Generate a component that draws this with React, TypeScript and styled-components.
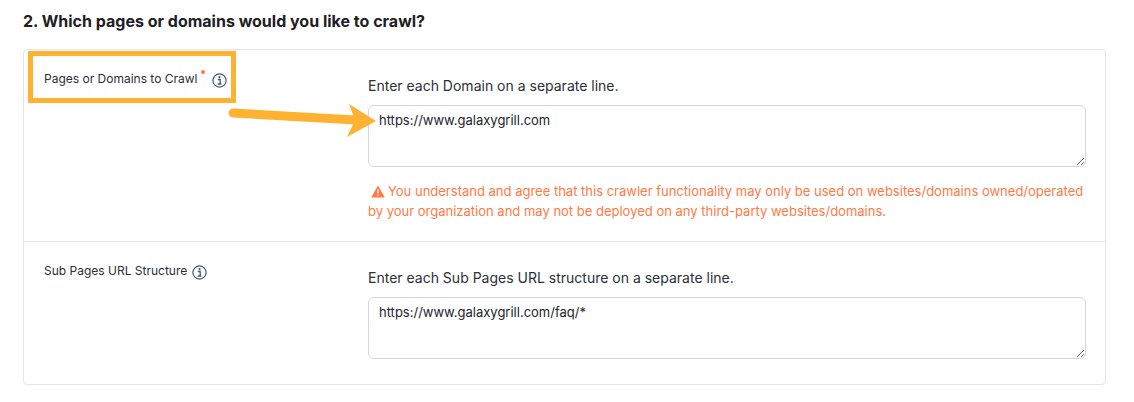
import React from "react";
import styled, { createGlobalStyle } from "styled-components";

const GlobalStyle = createGlobalStyle`
  html, body {
    margin: 0;
    background: #fff;
    font-family: Inter, "Liberation Sans", sans-serif;
    color: #22252a;
  }
`;

const Page = styled.div`
  position: relative;
  width: 1134px;
  height: 402px;
  padding: 12px 28px 0 23px;
  box-sizing: border-box;
  overflow: hidden;
`;

const Title = styled.h2`
  margin: 0 0 18px;
  font-size: 16px;
  line-height: 19px;
  font-weight: 700;
  color: #1d2024;
`;

const Card = styled.div`
  border: 1px solid #e4e5e7;
  border-radius: 4px;
`;

const Row = styled.div<{ $height: number }>`
  display: grid;
  grid-template-columns: 324px 718px;
  height: ${(p) => p.$height}px;
  box-sizing: border-box;
  padding-left: 20px;
  & + & {
    border-top: 1px solid #e4e5e7;
  }
`;

const LabelCell = styled.div`
  display: flex;
  align-items: flex-start;
  padding-top: 20px;
  font-size: 12px;
  line-height: 18px;
  color: #2b2f36;
`;

const Required = styled.span`
  width: 4px;
  height: 4px;
  margin-left: 3px;
  border-radius: 50%;
  background: #ff7a3d;
`;

const InfoWrap = styled.span<{ $gap: number }>`
  display: inline-flex;
  margin: 3px 0 0 ${(p) => p.$gap}px;
`;

const FieldCell = styled.div`
  padding-top: 27px;
`;

const Hint = styled.div`
  font-size: 14px;
  line-height: 18px;
  color: #2b2f36;
  margin-bottom: 10px;
`;

const Input = styled.textarea`
  display: block;
  width: 718px;
  height: 62px;
  box-sizing: border-box;
  padding: 5px 10px;
  border: 1px solid #d6d7da;
  border-radius: 6px;
  outline: none;
  font-family: Inter, "Liberation Sans", sans-serif;
  font-size: 13px;
  line-height: 18px;
  color: #22252a;
  background: #fff;
`;

const Warning = styled.div`
  margin-top: 14px;
  font-size: 13px;
  line-height: 20px;
  color: #ff7a45;
`;

const WarnIcon = styled.svg`
  width: 14px;
  height: 13px;
  vertical-align: -2px;
  margin: 0 3px 0 3px;
`;

const Highlight = styled.div`
  position: absolute;
  left: 28px;
  top: 51px;
  width: 208px;
  height: 52px;
  box-sizing: border-box;
  border: 5px solid #ffb131;
`;

const Arrow = styled.svg`
  position: absolute;
  left: 226px;
  top: 100px;
  width: 156px;
  height: 40px;
`;

const InfoIcon = () => (
  <svg width="15" height="15" viewBox="0 0 15 15" fill="none">
    <circle cx="7.5" cy="7.5" r="6.6" stroke="#3f5a73" strokeWidth="1.2" />
    <circle cx="7.5" cy="4.1" r="1.1" fill="#3f5a73" />
    <path d="M5.9 6.5h2.3v4.4M5.6 11h3.8" stroke="#3f5a73" strokeWidth="1.3" />
  </svg>
);

export default function App() {
  return (
    <>
      <GlobalStyle />
      <Page>
        <Title>2. Which pages or domains would you like to crawl?</Title>
        <Card>
          <Row $height={191}>
            <LabelCell>
              Pages or Domains to Crawl
              <Required />
              <InfoWrap $gap={7}>
                <InfoIcon />
              </InfoWrap>
            </LabelCell>
            <FieldCell>
              <Hint>Enter each Domain on a separate line.</Hint>
              <Input readOnly defaultValue="https://www.galaxygrill.com" />
              <Warning>
                <WarnIcon viewBox="0 0 14 13">
                  <path d="M7 0.5L13.8 12.5H0.2Z" fill="#ff7a45" />
                  <path d="M7 4.5v4M7 9.7v1.4" stroke="#fff" strokeWidth="1.3" />
                </WarnIcon>
                You understand and agree that this crawler functionality may only be used on websites/domains owned/operated by your organization and may not be deployed on any third-party websites/domains.
              </Warning>
            </FieldCell>
          </Row>
          <Row $height={143}>
            <LabelCell>
              Sub Pages URL Structure
              <InfoWrap $gap={5}>
                <InfoIcon />
              </InfoWrap>
            </LabelCell>
            <FieldCell>
              <Hint>Enter each Sub Pages URL structure on a separate line.</Hint>
              <Input readOnly defaultValue="https://www.galaxygrill.com/faq/*" />
            </FieldCell>
          </Row>
        </Card>
        <Highlight />
        <Arrow viewBox="0 0 156 40">
          <path d="M7 13L129 20" stroke="#ffb131" strokeWidth="9" strokeLinecap="round" />
          <path d="M123 4L150 21L121 37L129 20Z" fill="#ffb131" />
        </Arrow>
      </Page>
    </>
  );
}
